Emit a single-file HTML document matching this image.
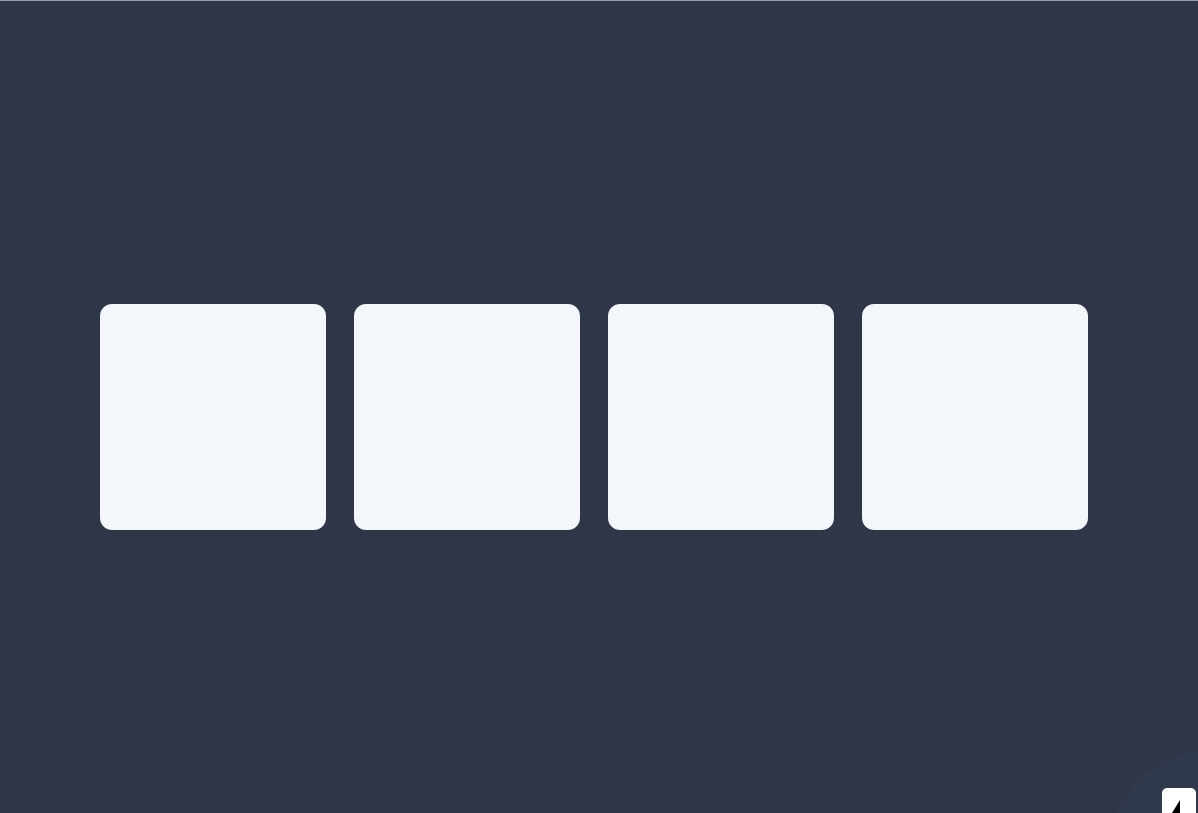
<!DOCTYPE html>
<html><head><meta charset="utf-8"><style>
html,body{margin:0;padding:0;width:1198px;height:813px;overflow:hidden;background:#2e3648}
.w{position:relative;width:1198px;height:813px;overflow:hidden}
.t{position:absolute;left:0;top:0;width:1198px;height:1px;background:#9a9ea6}
.c{position:absolute;top:304px;width:226px;height:226px;border-radius:12px;background:#f3f7fb}
.g{position:absolute;left:1110px;top:750px;width:200px;height:200px;border-radius:50%;background:radial-gradient(circle,#313a4c 60%,#2f3749 100%)}
.b{position:absolute;left:1162px;top:788px;width:34px;height:25px;border-radius:5px 5px 0 0;background:#fff;overflow:hidden}
</style></head><body><div class="w">
<div class="t"></div>
<div class="c" style="left:100px"></div>
<div class="c" style="left:354px"></div>
<div class="c" style="left:608px"></div>
<div class="c" style="left:862px"></div>
<div class="g"></div>
<div class="b"><svg width="34" height="25"><polygon points="10,25 18,12 18,25" fill="#000"/></svg></div>
</div></body></html>
